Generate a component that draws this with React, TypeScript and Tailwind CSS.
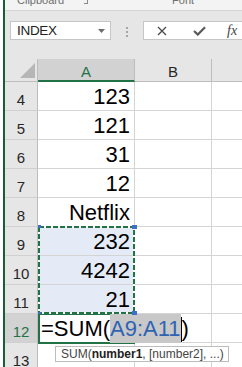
import React from 'react';

type RowData = { n: number; v?: string; sel?: boolean };

const rows: RowData[] = [
  { n: 4, v: '123' },
  { n: 5, v: '121' },
  { n: 6, v: '31' },
  { n: 7, v: '12' },
  { n: 8, v: 'Netflix' },
  { n: 9, v: '232', sel: true },
  { n: 10, v: '4242', sel: true },
  { n: 11, v: '21', sel: true },
];

// ─ Row header ─────────────────────────────────────────────────────────────────
const RowHead: React.FC<{ n: number; active?: boolean }> = ({ n, active }) => (
  <div
    className={`w-[33px] shrink-0 border-r border-b border-r-[#bdbdbd] border-b-[#d0d0d0] pt-[9px] text-center text-[15px] leading-[17px] ${
      active ? 'bg-[#d2d2d2] text-[#217346]' : 'bg-[#e6e6e6] text-[#262626]'
    }`}
  >
    {n}
  </div>
);

// ─ Plain grid row ─────────────────────────────────────────────────────────────
const GridRow: React.FC<RowData> = ({ n, v, sel }) => (
  <div className="flex h-[29px]">
    <RowHead n={n} />
    <div
      className={`w-[97px] shrink-0 border-r border-b border-[#d4d4d4] pr-[4px] pt-[3px] text-right text-[22px] leading-[24px] text-black ${
        sel ? 'bg-[#e4ebf6]' : 'bg-white'
      }`}
    >
      {v}
    </div>
    <div className="w-[77px] shrink-0 border-r border-b border-[#d4d4d4]" />
    <div className="flex-1 border-b border-[#d4d4d4]" />
  </div>
);

export default function App() {
  return (
    <div className="relative flex h-[367px] w-[242px] overflow-hidden bg-white font-['Liberation_Sans',Arial,sans-serif]">
      {/* window edge */}
      <div className="w-[3px] shrink-0 bg-white" />
      <div className="w-[2px] shrink-0 bg-[#1b5e36]" />

      <div className="flex min-w-0 flex-1 flex-col">
        {/* ribbon group labels, cut off */}
        <div className="h-[11px] shrink-0 overflow-hidden border-b border-[#d5d5d5] bg-[#f3f3f3]">
          <div className="-mt-[6px] flex items-start text-[11px] leading-[13px] text-[#6e6e6e]">
            <span className="ml-[12px]">Clipboard</span>
            <span className="ml-[20px] mt-[6px] h-[4px] w-[4px] border-r border-b border-[#8a8a8a]" />
            <span className="ml-[84px]">Font</span>
          </div>
        </div>

        {/* name box + formula bar */}
        <div className="flex h-[48px] shrink-0 items-start bg-[#e6e6e6] pl-[5px] pt-[10px]">
          <div className="flex h-[19px] w-[101px] shrink-0 items-center border border-[#c6c6c6] bg-white pl-[6px] pr-[5px]">
            <span className="flex-1 text-[13.5px] leading-[15px] tracking-[-0.3px] text-[#222]">INDEX</span>
            <svg width="7" height="4" viewBox="0 0 7 4">
              <polygon points="0,0 7,0 3.5,4" fill="#6d6d6d" />
            </svg>
          </div>
          <div className="flex h-[19px] w-[32px] shrink-0 flex-col items-center justify-center gap-[2px] pt-[3px]">
            <span className="h-[2px] w-[2px] bg-[#a6a6a6]" />
            <span className="h-[2px] w-[2px] bg-[#a6a6a6]" />
            <span className="h-[2px] w-[2px] bg-[#a6a6a6]" />
          </div>
          <div className="flex h-[19px] flex-1 items-center border border-r-0 border-[#c6c6c6] bg-white pl-[13px]">
            <svg width="10" height="10" viewBox="0 0 10 10">
              <path d="M1 1 L9 9 M9 1 L1 9" stroke="#4a4a4a" strokeWidth="1.3" />
            </svg>
            <svg className="ml-[26px]" width="13" height="10" viewBox="0 0 13 10">
              <path d="M1 5 L4.8 8.6 L12 1.2" stroke="#5a5a5a" strokeWidth="2.2" fill="none" />
            </svg>
            <span className="ml-[21px] font-['Liberation_Serif',serif] text-[14px] italic text-[#444]">fx</span>
          </div>
        </div>

        {/* column headers */}
        <div className="flex h-[23px] shrink-0">
          <div className="relative w-[33px] shrink-0 border-r border-b border-[#bdbdbd] bg-[#e6e6e6]">
            <svg className="absolute bottom-[3px] right-[2px]" width="15" height="15" viewBox="0 0 15 15">
              <polygon points="15,0 15,15 0,15" fill="#b6b6b6" />
            </svg>
          </div>
          <div className="w-[97px] shrink-0 border-r border-r-[#bdbdbd] border-b-2 border-b-[#217346] bg-[#d2d2d2] pt-[4px] text-center text-[15px] leading-[17px] text-[#217346]">
            A
          </div>
          <div className="w-[77px] shrink-0 border-r border-b border-[#bdbdbd] bg-[#e6e6e6] pt-[4px] text-center text-[15px] leading-[17px] text-[#262626]">
            B
          </div>
          <div className="flex-1 border-b border-[#bdbdbd] bg-[#e6e6e6]" />
        </div>

        {/* rows */}
        <div className="relative flex flex-col">
          {rows.map((r) => (
            <GridRow key={r.n} {...r} />
          ))}

          {/* row 12, editing */}
          <div className="flex h-[29px]">
            <RowHead n={12} active />
            <div className="relative w-[97px] shrink-0 border-r border-b border-[#d4d4d4]">
              <div className="absolute left-0 top-0 z-10 flex h-[29px] whitespace-nowrap pl-[3px] text-[22px] leading-[24px] text-black">
                <span className="pt-[3px]">=SUM(</span>
                <span className="h-[29px] bg-[#c8c8c8] pt-[3px] text-[#2e63b4]">A9:A11</span>
                <span className="mt-[3px] h-[25px] w-px bg-black" />
                <span className="pt-[3px]">)</span>
              </div>
            </div>
            <div className="w-[77px] shrink-0 border-r border-b border-[#d4d4d4]" />
            <div className="flex-1 border-b border-[#d4d4d4]" />
          </div>

          <GridRow n={13} />

          {/* active cell border */}
          <div className="pointer-events-none absolute left-[33px] top-[231px] h-[31px] w-[97px] border-2 border-[#217346]" />

          {/* referenced range A9:A11 */}
          <svg className="pointer-events-none absolute left-[33px] top-[144px] z-20 overflow-visible" width="97" height="88">
            <rect x="1" y="1" width="95" height="86" fill="none" stroke="#ffffff" strokeWidth="2" />
            <rect x="1" y="1" width="95" height="86" fill="none" stroke="#217346" strokeWidth="2" strokeDasharray="5 2" />
            <rect x="94" y="-1" width="5" height="4" fill="#3d6fc8" />
            <rect x="0" y="-1" width="3" height="3" fill="#3d6fc8" />
            <rect x="94" y="85" width="5" height="4" fill="#3d6fc8" />
            <rect x="0" y="86" width="3" height="2" fill="#3d6fc8" />
          </svg>
        </div>
      </div>

      {/* function tooltip */}
      <div className="absolute left-[55px] top-[346px] z-30 flex h-[16px] w-[174px] items-center border border-[#bcbcbc] bg-white pl-[5px] text-[12px] leading-[14px] text-[#444]">
        SUM(<b className="text-[#222]">number1</b>, [number2], ...)
      </div>
    </div>
  );
}
